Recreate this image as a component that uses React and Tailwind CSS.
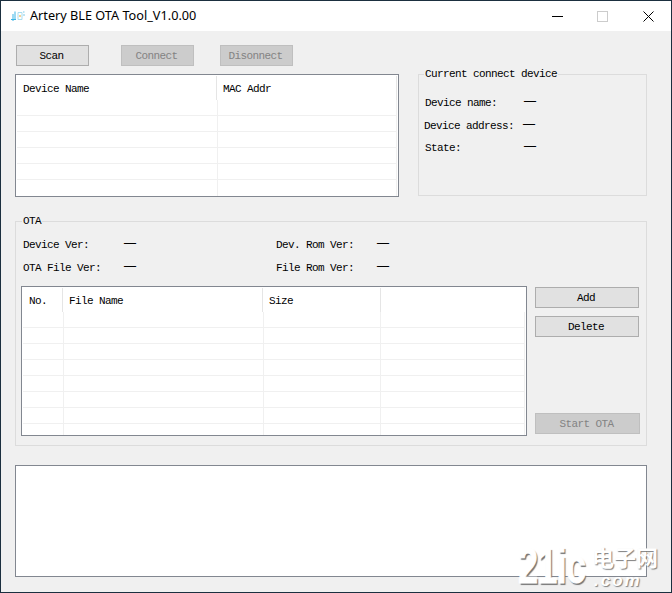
const mono = "font-['Liberation_Mono',monospace] text-[11px] tracking-[-0.6px] text-black leading-[12px]";

function Dash() {
  return <span className="relative top-[-3px] font-['Liberation_Serif',serif] font-bold text-[12px] leading-[12px] text-black tracking-normal">—</span>;
}

function Btn({ children, disabled, className = "" }) {
  return (
    <div
      className={`h-[21px] flex items-center justify-center pr-[2px] border ${mono} ${
        disabled ? "bg-[#cccccc] border-[#bfbfbf] !text-[#838383]" : "bg-[#e1e1e1] border-[#adadad]"
      } ${className}`}
    >
      {children}
    </div>
  );
}

function Table({ className, cols, headers, rows, lastSep }) {
  return (
    <div className={`bg-white border border-[#828790] p-px overflow-hidden ${className}`}>
      <div className="flex h-[24px]">
        {headers.map((h, i) => {
          const last = i === headers.length - 1;
          return (
            <div
              key={i}
              style={last ? undefined : { width: cols[i] - 1 }}
              className={`flex items-center h-[24px] pt-[2px] ${mono} ${i === 0 ? "pl-[6px]" : "pl-[5px] ml-px"} ${last ? "flex-1" : ""} ${
                !last || lastSep ? "border-r border-[#e5e5e5]" : ""
              }`}
            >
              {h}
            </div>
          );
        })}
      </div>
      {Array.from({ length: rows }).map((_, r) => (
        <div key={r} className={`flex h-[16px] ${r < rows - 1 ? "border-b border-[#f0f0f0]" : ""}`}>
          {cols.map((c, i) => (
            <div key={i} style={{ width: c }} className="h-full border-r border-[#f0f0f0]" />
          ))}
        </div>
      ))}
    </div>
  );
}

function Field({ label, labelW, className = "", lx = "" }) {
  return (
    <div className={`flex items-center h-[12px] ${className}`}>
      <span style={{ width: labelW }} className={`${mono} ${lx} whitespace-pre`}>{label}</span>
      <Dash />
    </div>
  );
}

function AppIcon() {
  return (
    <svg width="15" height="12" viewBox="0 0 15 12" fill="none" className="ml-[9px] mr-[5px]">
      <path d="M1 9.5H6M3 4V11M5 1.5V10" stroke="#3db5e6" strokeWidth="1" />
      <path d="M8 2.5V9.5H12V2.5H8Z" stroke="#a9dcef" strokeWidth="1" />
      <path d="M10 5V7" stroke="#f0b44a" strokeWidth="1.2" />
      <path d="M13 2H14.5M14 4V6" stroke="#7ccbe8" strokeWidth="1" />
    </svg>
  );
}

export default function App() {
  return (
    <div className="relative w-[672px] h-[593px] border border-[#1b2f3f] bg-[#f0f0f0] overflow-hidden flex flex-col">
      <div className="h-[30px] bg-white flex items-center shrink-0">
        <AppIcon />
        <span className="font-['Noto_Sans',sans-serif] text-[12.7px] text-black">Artery BLE OTA Tool_V1.0.00</span>
        <div className="ml-auto flex items-center">
          <svg width="11" height="11" viewBox="0 0 11 11" className="mr-[34px]">
            <path d="M0 5.5H11" stroke="#000" />
          </svg>
          <svg width="11" height="11" viewBox="0 0 11 11" className="mr-[35px]">
            <rect x="0.5" y="0.5" width="10" height="10" fill="none" stroke="#cccccc" />
          </svg>
          <svg width="11" height="11" viewBox="0 0 11 11" className="mr-[17px]">
            <path d="M0.5 0.5L10.5 10.5M10.5 0.5L0.5 10.5" stroke="#000" />
          </svg>
        </div>
      </div>

      <div className="flex-1 pl-[14px] pt-[14px]">
        <div className="flex pl-px">
          <Btn className="w-[73px]">Scan</Btn>
          <Btn disabled className="w-[73px] ml-[32px]">Connect</Btn>
          <Btn disabled className="w-[73px] ml-[26px]">Disonnect</Btn>
        </div>

        <div className="flex mt-[8px]">
          <Table className="w-[384px] h-[123px]" cols={[201, 179]} headers={["Device Name", "MAC Addr"]} rows={6} lastSep />
          <div className="relative w-[229px] h-[122px] ml-[19px] border border-[#dcdcdc] pl-[6px] pt-[22px]">
            <span className={`absolute left-[5px] top-[-7px] bg-[#f0f0f0] px-px ${mono}`}>Current connect device</span>
            <Field label="Device name:" labelW={99} />
            <Field label="Device address:" labelW={99} lx="ml-[-1px]" className="mt-[11px]" />
            <Field label="State:" labelW={99} className="mt-[10px]" />
          </div>
        </div>

        <div className="relative w-[632px] h-[225px] mt-[24px] border border-[#dcdcdc] pl-[5px] pt-[17px]">
          <span className={`absolute left-[6px] top-[-7px] bg-[#f0f0f0] px-px ${mono}`}>OTA</span>
          <div className="flex pl-[2px]">
            <Field label="Device Ver:" labelW={101} />
            <Field label="Dev. Rom Ver:" labelW={101} className="ml-[140px]" />
          </div>
          <div className="flex pl-[2px] mt-[11px]">
            <Field label="OTA File Ver:" labelW={101} />
            <Field label="File Rom Ver:" labelW={101} className="ml-[140px]" />
          </div>
          <div className="flex mt-[12px]">
            <Table className="w-[506px] h-[150px]" cols={[41, 200, 118, 144]} headers={["No.", "File Name", "Size", ""]} rows={8} />
            <div className="flex flex-col ml-[8px] pt-px">
              <Btn className="w-[104px]">Add</Btn>
              <Btn className="w-[104px] mt-[8px]">Delete</Btn>
              <Btn disabled className="w-[105px] mt-[76px]">Start OTA</Btn>
            </div>
          </div>
        </div>

        <div className="w-[632px] h-[112px] mt-[19px] bg-white border border-[#828790]" />
      </div>

      <div className="absolute left-[517px] top-[541px] w-[150px] h-[48px] pointer-events-none">
        <span className="absolute left-0 top-[0px] origin-left scale-x-[0.72] font-['Liberation_Sans',sans-serif] font-bold text-[50px] leading-[48px] text-white tracking-[-1px] [-webkit-text-stroke:1px_#ffffff] [text-shadow:2px_2px_1px_#777777]">21ic</span>
        <span className="absolute left-[74px] top-[4px] font-['Noto_Sans_CJK_SC',sans-serif] font-bold text-[22px] leading-[20px] text-white [text-shadow:1px_1px_1px_#808080]">电子网</span>
        <span className="absolute left-[76px] top-[32px] font-['Liberation_Sans',sans-serif] font-bold italic text-[17px] leading-[14px] tracking-[2px] text-white [text-shadow:1px_1px_1px_#808080]">.com</span>
      </div>
    </div>
  );
}
